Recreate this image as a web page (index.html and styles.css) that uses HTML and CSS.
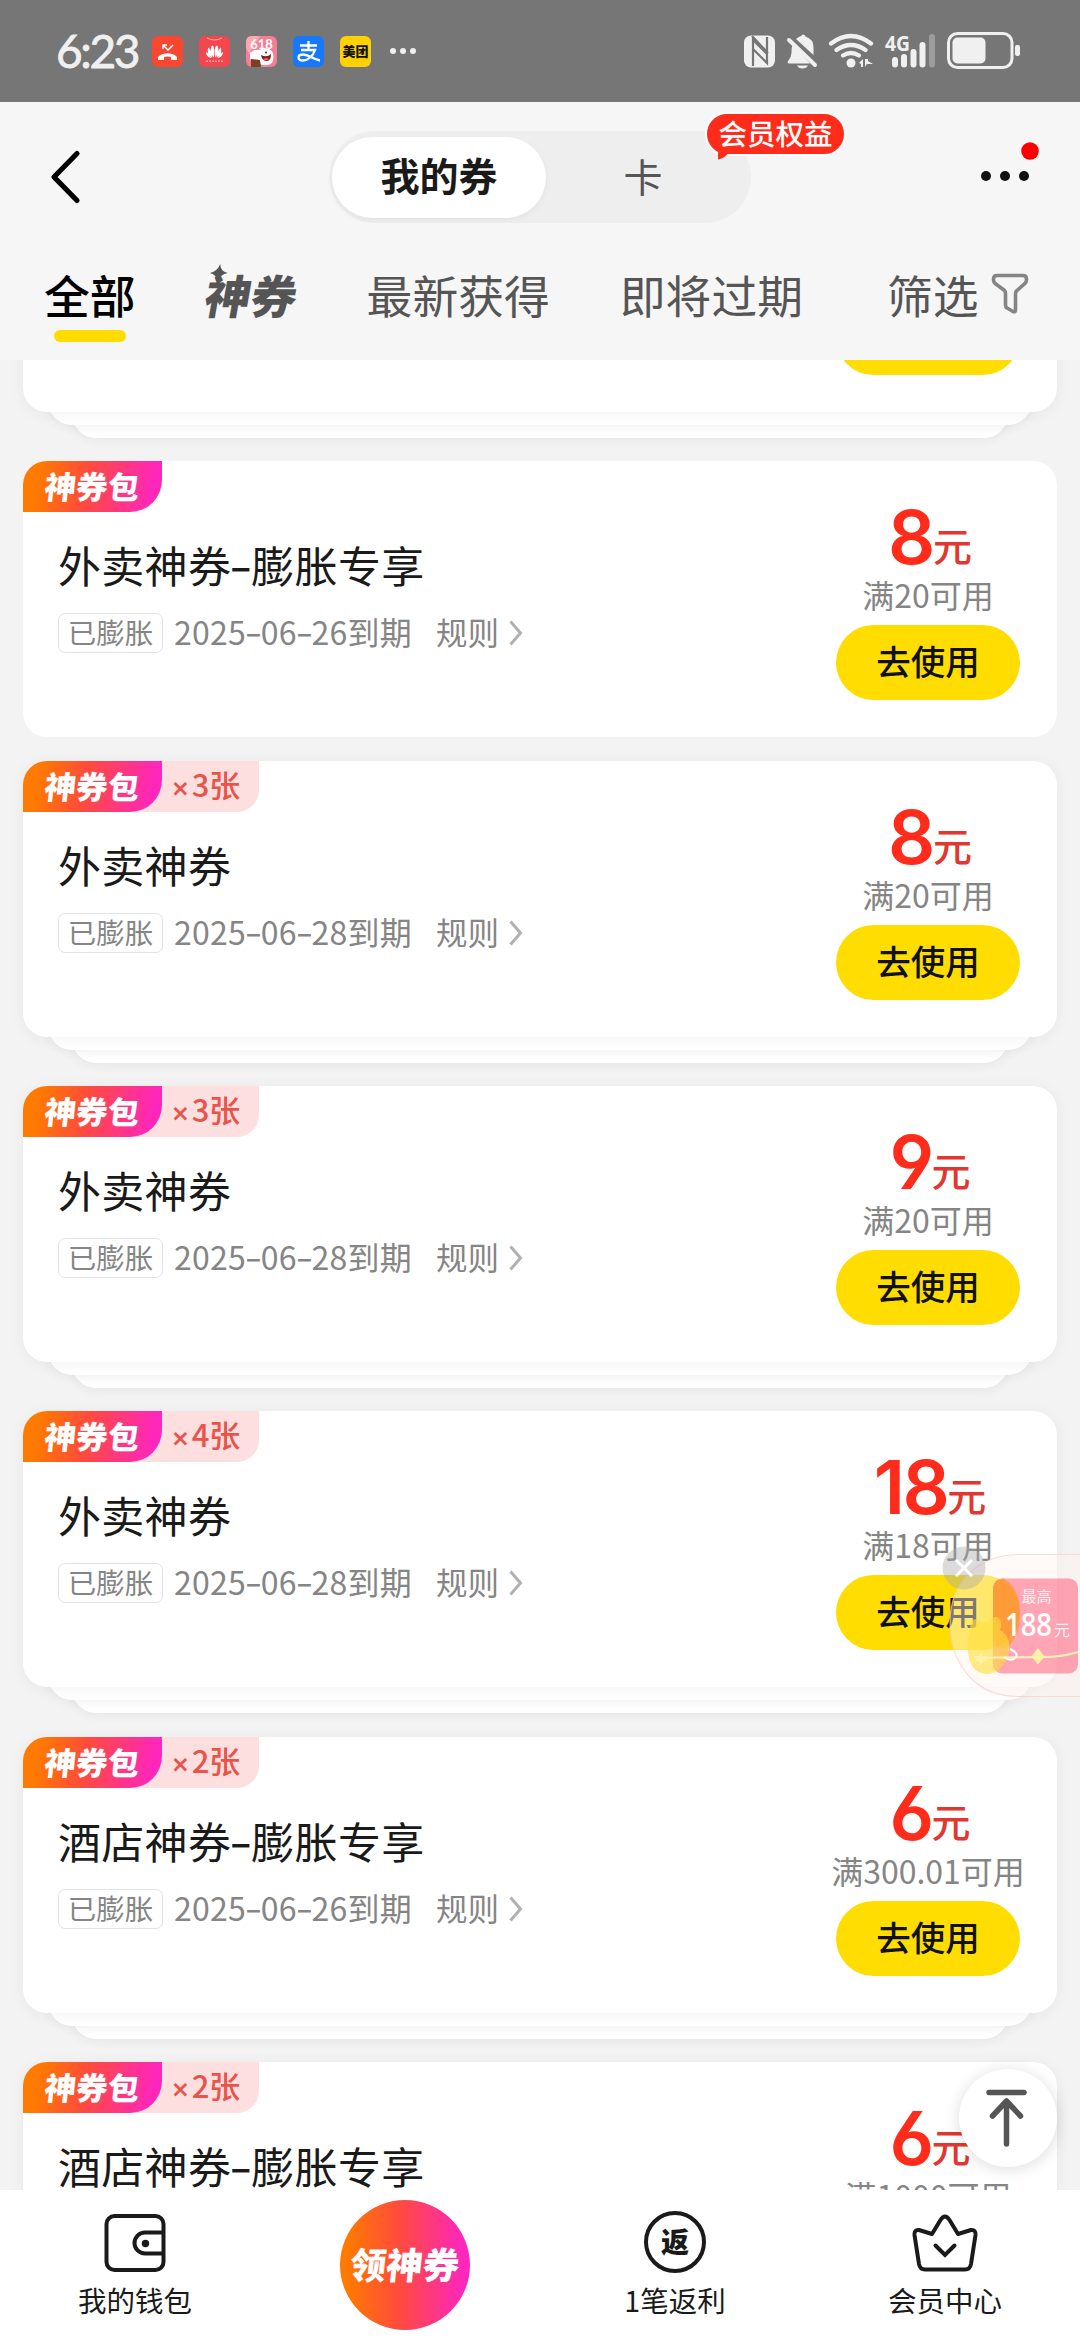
FILE: index.html
```html
<!DOCTYPE html>
<html lang="zh-CN">
<head>
<meta charset="utf-8">
<title>我的券</title>
<link rel="stylesheet" href="styles.css">
</head>
<body>
<svg class="defs" width="0" height="0">
  <symbol id="arrow" viewBox="0 0 16 28"><path d="M2.5 2.5 12.5 14 2.5 25.500" fill="none" stroke="#b0b0b0" stroke-width="3"/></symbol>
</svg>
<div class="screen">
  <div class="status">
    <span class="clock">6:23</span>
    <div class="apps">
      <svg class="app" viewBox="0 0 31 31"><rect width="31" height="31" rx="6" fill="#f9482f"/><path d="M6 24v-3c5-5 14-5 19 0v3h-6v-3q-3.500-1-7 0v3z" fill="#fff"/><path d="M11 13V9h4M11 9l5 5 5-5" fill="none" stroke="#fff" stroke-width="1.500"/></svg>
      <svg class="app" viewBox="0 0 31 31"><rect width="31" height="31" rx="6" fill="#f2474f"/><path d="M8 2q7.500 4 15 0" fill="none" stroke="#ffb09a"/><g fill="#fff"><path d="M15 21.500C11 18 11 12 13 9.500q3 0 2 12zM16 21.500C20 18 20 12 18 9.500q-3 0-2 12zM13.500 21.500C9 19 8 15 9.300 11.500q2 1 4.200 10zM17.500 21.500C22 19 23 15 21.700 11.500q-2 1-4.200 10zM12.500 22C9 21.500 7 19 7 16q2 0 5.500 6zM18.500 22c3.500-.5 5.500-3 5.500-6q-2 0-5.500 6z"/><path d="M7.500 24.500h1v1.500h-1zm3 0h1v1.500h-1zm3 0h1v1.500h-1zm3 0h1v1.500h-1zm3 0h1v1.500h-1zm3 0h1v1.500h-1z"/></g></svg>
      <svg class="app" viewBox="0 0 31 31"><rect width="31" height="31" rx="6" fill="#f87c93"/><path d="M0 12V6q0-6 6-6h8L3 18z" fill="#fba7b2"/><path d="M4 17q4-4 9-3 8-4 13 1 3 6 0 12-5 4-12 1-7 0-10-5z" fill="#fff"/><text x="15.500" y="13" class="app-618">618</text><path d="M15 19q6 3 10-1 0 7-4 7-5 0-6-6z" fill="#712020"/><path d="M17 23q3-2 6 0-3 3-6 0z" fill="#f2526a"/><path d="M5 23l9 1 1 7H5z" fill="#7b3f22"/><circle cx="20" cy="16.500" r="1" fill="#333"/></svg>
      <svg class="app" viewBox="0 0 31 31"><rect width="31" height="31" rx="6" fill="#1677ff"/><path d="M7 9.500h17M15.500 5v9M8 14h14c-2 6-7 10.500-12 10.500-6 0-6-6 0-6 6 0 10 5 17 6" fill="none" stroke="#fff" stroke-width="2.300"/></svg>
      <span class="app meituan">美团</span>
    </div>
    <svg class="more-apps" width="28" height="8"><g fill="#f0f0f0"><circle cx="4" cy="4" r="3"/><circle cx="14" cy="4" r="3"/><circle cx="24" cy="4" r="3"/></g></svg>
    <svg class="sys" width="280" height="42" viewBox="740 30 280 42">
      <rect x="742" y="35.500" width="31" height="32" rx="7" fill="#f0f0f0"/>
      <path d="M751 66V40l14 14v9M765 37v26L751 49M750 36l16 17" fill="none" stroke="#767676" stroke-width="2.200"/>
      <path d="M800.500 34.500q2.500 0 3 2 8 2.500 8 11v7.500L794 39q3-2.500 5-3zM791 44l17 19.500H787q-2-.5-1-2.500 3.500-4 3.500-9 0-5 1.500-8zM795 65.500h11q-1.500 3-5.500 3t-5.500-3z" fill="#f0f0f0"/>
      <path d="M787 40l26 25" stroke="#f0f0f0" stroke-width="4" stroke-linecap="round"/>
      <g fill="none" stroke="#f0f0f0" stroke-width="4.200" stroke-linecap="round"><path d="M829 43.500q20-15 40 0M834.500 50q14.500-10 29 0M841 55.500q8-5 16 0"/></g>
      <circle cx="849" cy="63" r="4.500" fill="#f0f0f0"/>
      <path d="M857 63l4-4v8h-2v-3zM863 59v8l2-3h6l-5-3v-2z" fill="#f0f0f0"/>
      <text x="883" y="51" class="net" textLength="25" lengthAdjust="spacingAndGlyphs">4G</text>
      <g stroke="#f0f0f0" stroke-width="6" stroke-linecap="round"><path d="M893 60v4.500M902 57v7.500M911.500 52v12.500M920.500 45v19.500"/><path d="M930 37v27.500" stroke="#9c9c9c"/></g>
      <rect x="946.500" y="33.500" width="63.500" height="34" rx="9" fill="none" stroke="#f0f0f0" stroke-width="3"/>
      <rect x="950.500" y="37.500" width="33" height="26" rx="5" fill="#f0f0f0"/>
      <rect x="1013" y="45" width="5" height="11" rx="2" fill="#f0f0f0"/>
    </svg>
  </div>

  <header class="header">
    <div class="topbar">
      <svg class="back" width="34" height="58" viewBox="0 0 34 58"><path d="M28 5.500 5 29 28 52.500" fill="none" stroke="#000" stroke-width="5.200" stroke-linecap="round" stroke-linejoin="round"/></svg>
      <div class="switch">
        <span class="seg on">我的券</span><span class="seg">卡</span>
        <span class="bubble">会员权益<svg class="tail" width="12" height="9"><path d="M1 0v7.500q6-1 10-6z" fill="#ff2c1b"/></svg></span>
      </div>
      <svg class="menu" width="70" height="50"><g fill="#111"><circle cx="9" cy="35" r="5"/><circle cx="28" cy="35" r="5"/><circle cx="47" cy="35" r="5"/></g><circle cx="53" cy="10" r="8.800" fill="#f00"/></svg>
    </div>
    <nav class="tabs">
      <span class="tab active">全部</span>
      <span class="tab brand">神券<svg class="spark" width="18" height="18"><path d="M9 0q1 7 9 9-7 1-9 9-2-8-9-9 7-1 9-9z" fill="#555"/></svg></span>
      <span class="tab">最新获得</span>
      <span class="tab">即将过期</span>
      <span class="tab filter">筛选<svg width="38" height="42" viewBox="0 0 38 42"><path d="M6 2.500h26q3.500 0 3.500 3.500v1q0 2-2 3.800L26 17.500q-1.500 1.200-1.500 3V37q0 2.500-2.500 1.500l-6-3.500q-1.500-1-1.500-3V20q0-1.500-1.200-2.700L4.500 10.800Q2.500 9 2.500 7V6q0-3.500 3.500-3.500z" fill="none" stroke="#858585" stroke-width="3.600" stroke-linejoin="round"/></svg></span>
    </nav>
  </header>

  <main class="list">
    <div class="cards">
      <section class="stack"><div class="card"><div class="info"></div><div class="action"><span class="use blank"></span></div></div><i class="l1"></i><i class="l2"></i></section>

      <section class="stack single"><div class="card">
        <div class="ribbon"><b class="pack"><em>神券包</em></b></div>
        <div class="info"><h2>外卖神券<s>-</s>膨胀专享</h2><p><span class="tag">已膨胀</span><span class="date">2025<s>-</s>06<s>-</s>26到期</span><span class="rule">规则</span><svg class="go"><use href="#arrow"/></svg></p></div>
        <div class="action"><div class="price"><b>8</b>元</div><div class="cond">满20可用</div><span class="use">去使用</span></div>
      </div></section>

      <section class="stack"><div class="card">
        <div class="ribbon"><b class="pack"><em>神券包</em></b><span class="count"><s>×</s>3张</span></div>
        <div class="info"><h2>外卖神券</h2><p><span class="tag">已膨胀</span><span class="date">2025<s>-</s>06<s>-</s>28到期</span><span class="rule">规则</span><svg class="go"><use href="#arrow"/></svg></p></div>
        <div class="action"><div class="price"><b>8</b>元</div><div class="cond">满20可用</div><span class="use">去使用</span></div>
      </div><i class="l1"></i><i class="l2"></i></section>

      <section class="stack"><div class="card">
        <div class="ribbon"><b class="pack"><em>神券包</em></b><span class="count"><s>×</s>3张</span></div>
        <div class="info"><h2>外卖神券</h2><p><span class="tag">已膨胀</span><span class="date">2025<s>-</s>06<s>-</s>28到期</span><span class="rule">规则</span><svg class="go"><use href="#arrow"/></svg></p></div>
        <div class="action"><div class="price"><b>9</b>元</div><div class="cond">满20可用</div><span class="use">去使用</span></div>
      </div><i class="l1"></i><i class="l2"></i></section>

      <section class="stack"><div class="card">
        <div class="ribbon"><b class="pack"><em>神券包</em></b><span class="count"><s>×</s>4张</span></div>
        <div class="info"><h2>外卖神券</h2><p><span class="tag">已膨胀</span><span class="date">2025<s>-</s>06<s>-</s>28到期</span><span class="rule">规则</span><svg class="go"><use href="#arrow"/></svg></p></div>
        <div class="action"><div class="price"><b>18</b>元</div><div class="cond">满18可用</div><span class="use">去使用</span></div>
      </div><i class="l1"></i><i class="l2"></i></section>

      <section class="stack"><div class="card">
        <div class="ribbon"><b class="pack"><em>神券包</em></b><span class="count"><s>×</s>2张</span></div>
        <div class="info"><h2>酒店神券<s>-</s>膨胀专享</h2><p><span class="tag">已膨胀</span><span class="date">2025<s>-</s>06<s>-</s>26到期</span><span class="rule">规则</span><svg class="go"><use href="#arrow"/></svg></p></div>
        <div class="action"><div class="price"><b>6</b>元</div><div class="cond">满300.01可用</div><span class="use">去使用</span></div>
      </div><i class="l1"></i><i class="l2"></i></section>

      <section class="stack"><div class="card">
        <div class="ribbon"><b class="pack"><em>神券包</em></b><span class="count"><s>×</s>2张</span></div>
        <div class="info"><h2>酒店神券<s>-</s>膨胀专享</h2></div>
        <div class="action"><div class="price"><b>6</b>元</div><div class="cond">满1000可用</div></div>
      </div></section>
    </div>
  </main>

  <footer class="nav">
    <div class="item"><svg width="62" height="62" viewBox="0 0 62 62"><g fill="none" stroke="#1a1a1a" stroke-width="4"><rect x="2.500" y="5" width="57" height="54" rx="8"/><path d="M59 21.500H41a10.500 10.500 0 0 0 0 21h18"/></g><circle cx="41.500" cy="32.500" r="3.700" fill="#1a1a1a"/></svg><span>我的钱包</span></div>
    <div class="item"><div class="grab"><em>领神券</em></div></div>
    <div class="item"><div class="coin">返</div><span>1笔返利</span></div>
    <div class="item"><svg width="66" height="62" viewBox="0 0 66 62"><path d="M28.500 9q4.500-7 9 0l8.500 14 13-4q5-.5 4.500 5L59 53q-1 5.500-6 5.500H13Q8 58.500 7 53L2.500 24q-.5-5.500 4.500-5l13 4z" fill="none" stroke="#1a1a1a" stroke-width="4" stroke-linejoin="round"/><path d="M23.500 34.500 33 44l9.500-9.500" fill="none" stroke="#1a1a1a" stroke-width="4" stroke-linecap="round"/></svg><span>会员中心</span></div>
  </footer>

  <div class="promo">
    <svg width="138" height="154" viewBox="942 1544 138 154">
      <path d="M1082 1554.500h-62c-40 0-70 26-70 68 0 42 26 74 68 74h64z" fill="#fff3f0" fill-opacity=".45" stroke="#f8cfc4" stroke-opacity=".7" stroke-width="1.200"/>
      <rect x="993" y="1578.500" width="85" height="95" rx="9" fill="#ff5f7e" fill-opacity=".55"/>
      <path d="M993 1593q0-14.500 11-14.500 16 10 16 36 0 22-14 34-13-1-13-18z" fill="#ff9a20" fill-opacity=".7"/>
      <path d="M970 1628q1-11 8-8 5 5 11 0 4-5 10-2 4 5 1 12 13 8 8 26-7 18-22 18-15-2-17-17-3-8 1-29z" fill="#ffdf3a" fill-opacity=".62"/>
      <path d="M974 1657q30 1 60 0 25 1 44-5" fill="none" stroke="#fff0b8" stroke-width="2.200"/>
      <path d="M1010 1649q10 5 5 9-4 4-11-1" fill="none" stroke="#fff" stroke-width="2"/>
      <path d="M1038 1648l6.500 8.500-6.500 8-6.500-8zM981 1654l3 4 5 1-5 2-3 3-3-3-4-1 4-2z" fill="#fff2a6"/>
      <text x="1021.500" y="1601.500" class="p-top">最高</text><text x="1005" y="1636" class="p-num" textLength="47" lengthAdjust="spacingAndGlyphs">188</text><text x="1054" y="1635.500" class="p-unit">元</text>
      <circle cx="964" cy="1568" r="21.500" fill="#aaa" fill-opacity=".42"/><path d="M956 1560l16 16M972 1560l-16 16" stroke="#fff" stroke-width="3"/>
    </svg>
  </div>
  <div class="totop"><svg width="44" height="60" viewBox="0 0 44 60"><path d="M3 4.500h35M20.500 14v42M6.500 28l14-15 14 15" fill="none" stroke="#555" stroke-width="5.500" stroke-linecap="round" stroke-linejoin="round"/></svg></div>
</div>
</body>
</html>
```
FILE: styles.css
```css
* { box-sizing: border-box; }
body { margin: 0; font-family: "Noto Sans CJK SC", sans-serif; color: #1a1a1a; }
.defs { position: absolute; }
.screen { position: relative; width: 1080px; height: 2340px; display: flex; flex-direction: column; overflow: hidden; background: #f3f3f3; }

.status { height: 102px; background: #767676; display: flex; align-items: center; padding-left: 56px; }
.clock { width: 96px; font: 46px/60px Lato, sans-serif; color: #f0f0f0; letter-spacing: -2.400px; -webkit-text-stroke: .8px #f0f0f0; }
.apps { display: flex; gap: 16px; }
.app { width: 31px; height: 31px; display: block; }
.app-618 { font: 700 13px Lato, sans-serif; fill: #fff; text-anchor: middle; }
.meituan { border-radius: 6px; background: #ffd100; color: #111; font-size: 13px; font-weight: 900; line-height: 30px; text-align: center; white-space: nowrap; }
.more-apps { margin-left: 18px; }
.sys { margin-left: 325px; }
.net { font: 700 22px "Open Sans", sans-serif; fill: #f0f0f0; }

.header { height: 258px; background: #f6f6f6; display: flex; flex-direction: column; }
.topbar { height: 150px; display: flex; align-items: center; padding-left: 49px; }
.switch { position: relative; width: 422px; height: 92px; margin-left: 246px; border-radius: 46px; background: #eee; display: flex; align-items: center; padding: 0 3px; }
.seg { width: 194px; height: 81px; border-radius: 41px; font-size: 39px; line-height: 76px; text-align: center; color: #555; }
.seg.on { width: 214px; background: #fff; color: #1a1a1a; font-weight: 700; line-height: 74px; box-shadow: 0 2px 6px rgba(0,0,0,.05); }
.bubble { position: absolute; left: 376px; top: -19px; width: 141px; height: 44px; border: 2px solid #fff; border-radius: 22px; background: #ff2c1b; color: #fff; font-size: 28.500px; font-weight: 500; line-height: 38px; text-align: center; white-space: nowrap; }
.tail { position: absolute; left: 10px; top: 38px; }
.menu { margin: -22px 0 0 226px; }
.tabs { display: flex; align-items: center; height: 84px; padding-left: 44px; white-space: nowrap; }
.tab { font-size: 45.800px; line-height: 66px; color: #555; margin-right: 70px; }
.tab.active { position: relative; color: #000; font-weight: 500; }
.tab.active::after { content: ""; position: absolute; left: 10px; top: 69px; width: 72px; height: 12px; border-radius: 6px; background: #ffdd00; }
.tab.brand { position: relative; width: 94px; margin-right: 67px; font-weight: 900; transform: skewX(-10deg); }
.spark { position: absolute; left: 0; top: 3px; }
.filter { display: flex; align-items: center; gap: 12px; margin: 0 0 0 14px; }

.list { flex: 1; min-height: 0; overflow: hidden; }
.cards { margin-top: -224px; padding: 0 23px; display: flex; flex-direction: column; gap: 23.330px; }
.stack { position: relative; z-index: 0; padding-bottom: 26px; flex: none; }
.stack.single { padding-bottom: 0; }
.card { position: relative; height: 276px; border-radius: 24px; background: #fff; box-shadow: 0 2px 16px rgba(0,0,0,.05); display: grid; grid-template: 51px 1fr / 1fr 258px; overflow: hidden; }
.stack.single .card { box-shadow: none; }
.l1, .l2 { position: absolute; z-index: -1; left: 25px; right: 25px; bottom: 13px; height: 60px; border-radius: 24px; background: #fff; box-shadow: 0 2px 12px rgba(0,0,0,.06); }
.l2 { z-index: -2; left: 49px; right: 49px; bottom: 0; }
.ribbon { grid-column: 1; display: flex; }
.pack { position: relative; width: 139px; height: 51px; padding-left: 22px; border-radius: 0 0 32px 0; background: linear-gradient(100deg, #ff7a00 12%, #ff4b3d 45%, #ff26bd 92%); color: #fff; font-size: 31.500px; font-weight: 900; line-height: 48px; }
.pack em, .grab em { display: inline-block; font-style: normal; transform: skewX(-6deg); }
.count { height: 51px; width: 129px; margin-left: -32px; padding-left: 41px; border-radius: 0 0 22px 0; background: #fddfe0; color: #e8534a; font-size: 31px; font-weight: 500; line-height: 46px; white-space: nowrap; }
.count s { margin-right: 2px; font-size: 28px; transform: none; }
.info { grid-column: 1; grid-row: 2; padding-left: 35px; }
s { display: inline-block; text-decoration: none; font-family: Inter, sans-serif; line-height: 1; transform: scaleX(1.25); }
h2 { height: 64px; margin: 20px 0 0; font-size: 43px; font-weight: 400; line-height: 64px; letter-spacing: .3px; white-space: nowrap; }
p { margin: 16px 0 0; display: flex; align-items: center; height: 42px; color: #858585; font-size: 32px; line-height: 40px; white-space: nowrap; }
.tag { width: 105px; height: 40px; margin-right: 11px; border: 1px solid #e3e3e3; border-radius: 7px; font-size: 28.500px; line-height: 35px; text-align: center; }
.date { width: 262px; height: 44px; letter-spacing: .2px; }
.rule { width: 72px; height: 44px; font-size: 31.500px; }
.go { width: 16px; height: 28px; }
.action { grid-column: 2; grid-row: 1 / 3; display: flex; flex-direction: column; align-items: center; padding-top: 40px; }
.use.blank { margin-top: 124px; }
.price { height: 76px; color: #e03830; font-size: 39px; font-weight: 500; line-height: 86px; display: flex; align-items: flex-start; margin-left: 4px; }
.price b { color: #ff2c1b; font: 600 74px/72px Inter, sans-serif; font-feature-settings: "cv03", "cv04"; letter-spacing: -2.500px; }
.cond { height: 48px; font-size: 32px; line-height: 34px; color: #858585; white-space: nowrap; }
.use { width: 184px; height: 75px; border-radius: 38px; background: #ffdd00; color: #111; font-size: 34.500px; font-weight: 500; line-height: 71px; text-align: center; flex: none; }

.nav { position: relative; height: 150px; background: #fff; display: flex; }
.item { width: 270px; display: flex; flex-direction: column; align-items: center; padding-top: 21px; font-size: 28.500px; line-height: 36px; }
.item span { margin-top: 9px; height: 40px; }
.grab { width: 130px; height: 130px; margin-top: -11px; border-radius: 50%; background: linear-gradient(90deg, #ff7a00 5%, #ff4b3d 45%, #ff26bd 95%); color: #fff; font-size: 36.500px; font-weight: 900; line-height: 128px; text-align: center; white-space: nowrap; }
.coin { width: 62px; height: 62px; border: 4px solid #1a1a1a; border-radius: 50%; font-size: 28px; font-weight: 900; line-height: 52px; text-align: center; }

.promo { position: absolute; left: 942px; top: 1544px; width: 138px; height: 154px; }
.promo svg { display: block; }
.p-top { font-size: 15px; fill: #fff; opacity: .85; }
.p-num { font: 600 32px "Open Sans", sans-serif; fill: #fff; }
.p-unit { font-size: 16px; fill: #fff; opacity: .85; }
.totop { position: absolute; left: 959px; top: 2069px; width: 98px; height: 98px; border-radius: 50%; background: #fff; box-shadow: 0 2px 16px rgba(0,0,0,.14); display: flex; align-items: center; justify-content: center; }
```
